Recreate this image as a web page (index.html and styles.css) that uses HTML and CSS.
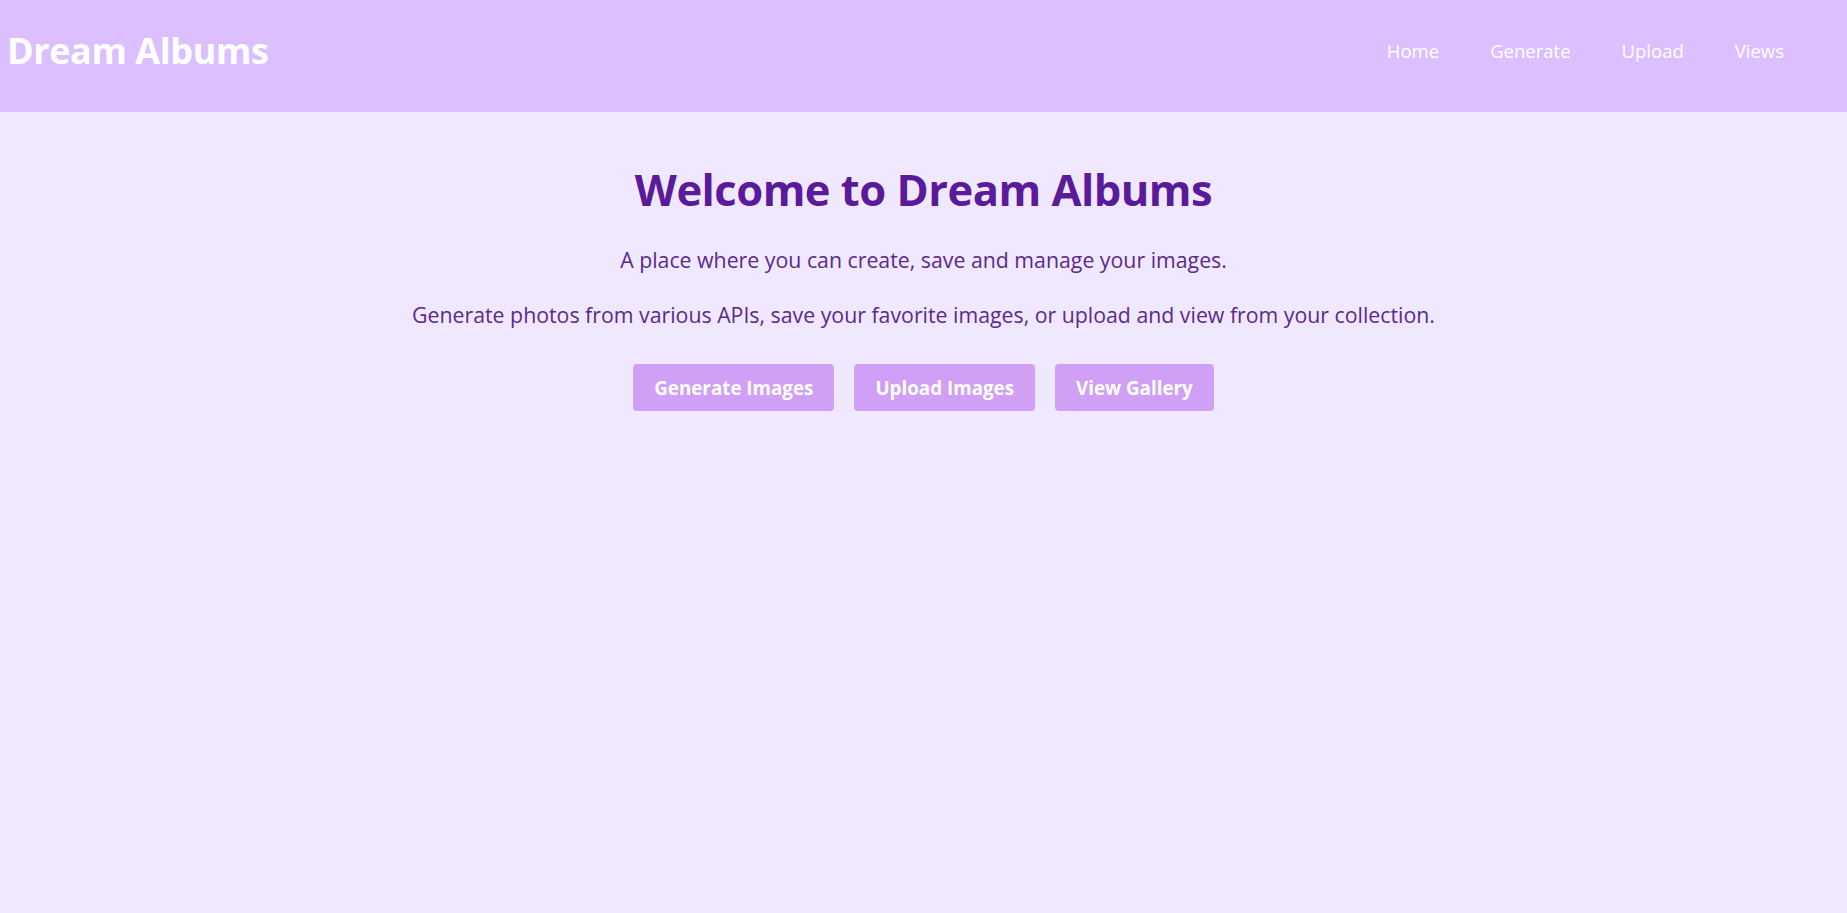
FILE: index.html
```html
<!DOCTYPE html>
<html lang="en">
<head>
<meta charset="utf-8">
<title>Dream Albums</title>
<link rel="stylesheet" href="styles.css">
</head>
<body>
<header class="topbar">
  <div class="brand">Dream Albums</div>
  <nav class="nav">
    <a href="#" class="nav-link">Home</a>
    <a href="#" class="nav-link">Generate</a>
    <a href="#" class="nav-link">Upload</a>
    <a href="#" class="nav-link">Views</a>
  </nav>
</header>
<main class="hero">
  <h1 class="hero-title">Welcome to Dream Albums</h1>
  <p class="hero-text first">A place where you can create, save and manage your images.</p>
  <p class="hero-text second">Generate photos from various APIs, save your favorite images, or upload and view from your collection.</p>
  <div class="actions">
    <a href="#" class="btn">Generate Images</a>
    <a href="#" class="btn">Upload Images</a>
    <a href="#" class="btn">View Gallery</a>
  </div>
</main>
</body>
</html>
```

FILE: styles.css
```css
html, body {
  margin: 0;
  padding: 0;
}
body {
  background: #f0e8fe;
  font-family: "Open Sans", "Noto Sans", sans-serif;
  min-height: 913px;
}
.topbar {
  height: 112px;
  background: #dcbfff;
  display: flex;
  align-items: center;
  justify-content: space-between;
  padding: 0 63px 12px 7px;
  box-sizing: border-box;
}
.brand {
  color: #ffffff;
  font-weight: 700;
  font-size: 36px;
  letter-spacing: -0.4px;
}
.nav {
  display: flex;
  gap: 51px;
}
.nav-link {
  color: #ffffff;
  text-decoration: none;
  font-size: 18.5px;
}
.hero {
  display: flex;
  flex-direction: column;
  align-items: center;
  text-align: center;
  padding-top: 50px;
}
.hero-title {
  margin: 0;
  color: #5a1a9a;
  font-size: 43.5px;
  font-weight: 700;
  line-height: 1.3;
  letter-spacing: -0.5px;
}
.hero-text {
  margin: 0;
  color: #5a2a8e;
  font-size: 21.3px;
  line-height: 1.4;
}
.hero-text.first {
  margin-top: 26px;
}
.hero-text.second {
  margin-top: 26px;
}
.actions {
  display: flex;
  gap: 20px;
  margin-top: 34px;
}
.btn {
  display: inline-flex;
  align-items: center;
  justify-content: center;
  height: 47px;
  padding: 0 21px;
  box-sizing: border-box;
  background: #cfa0f6;
  color: #ffffff;
  font-weight: 700;
  font-size: 18.8px;
  text-decoration: none;
  border-radius: 4px;
}
```
